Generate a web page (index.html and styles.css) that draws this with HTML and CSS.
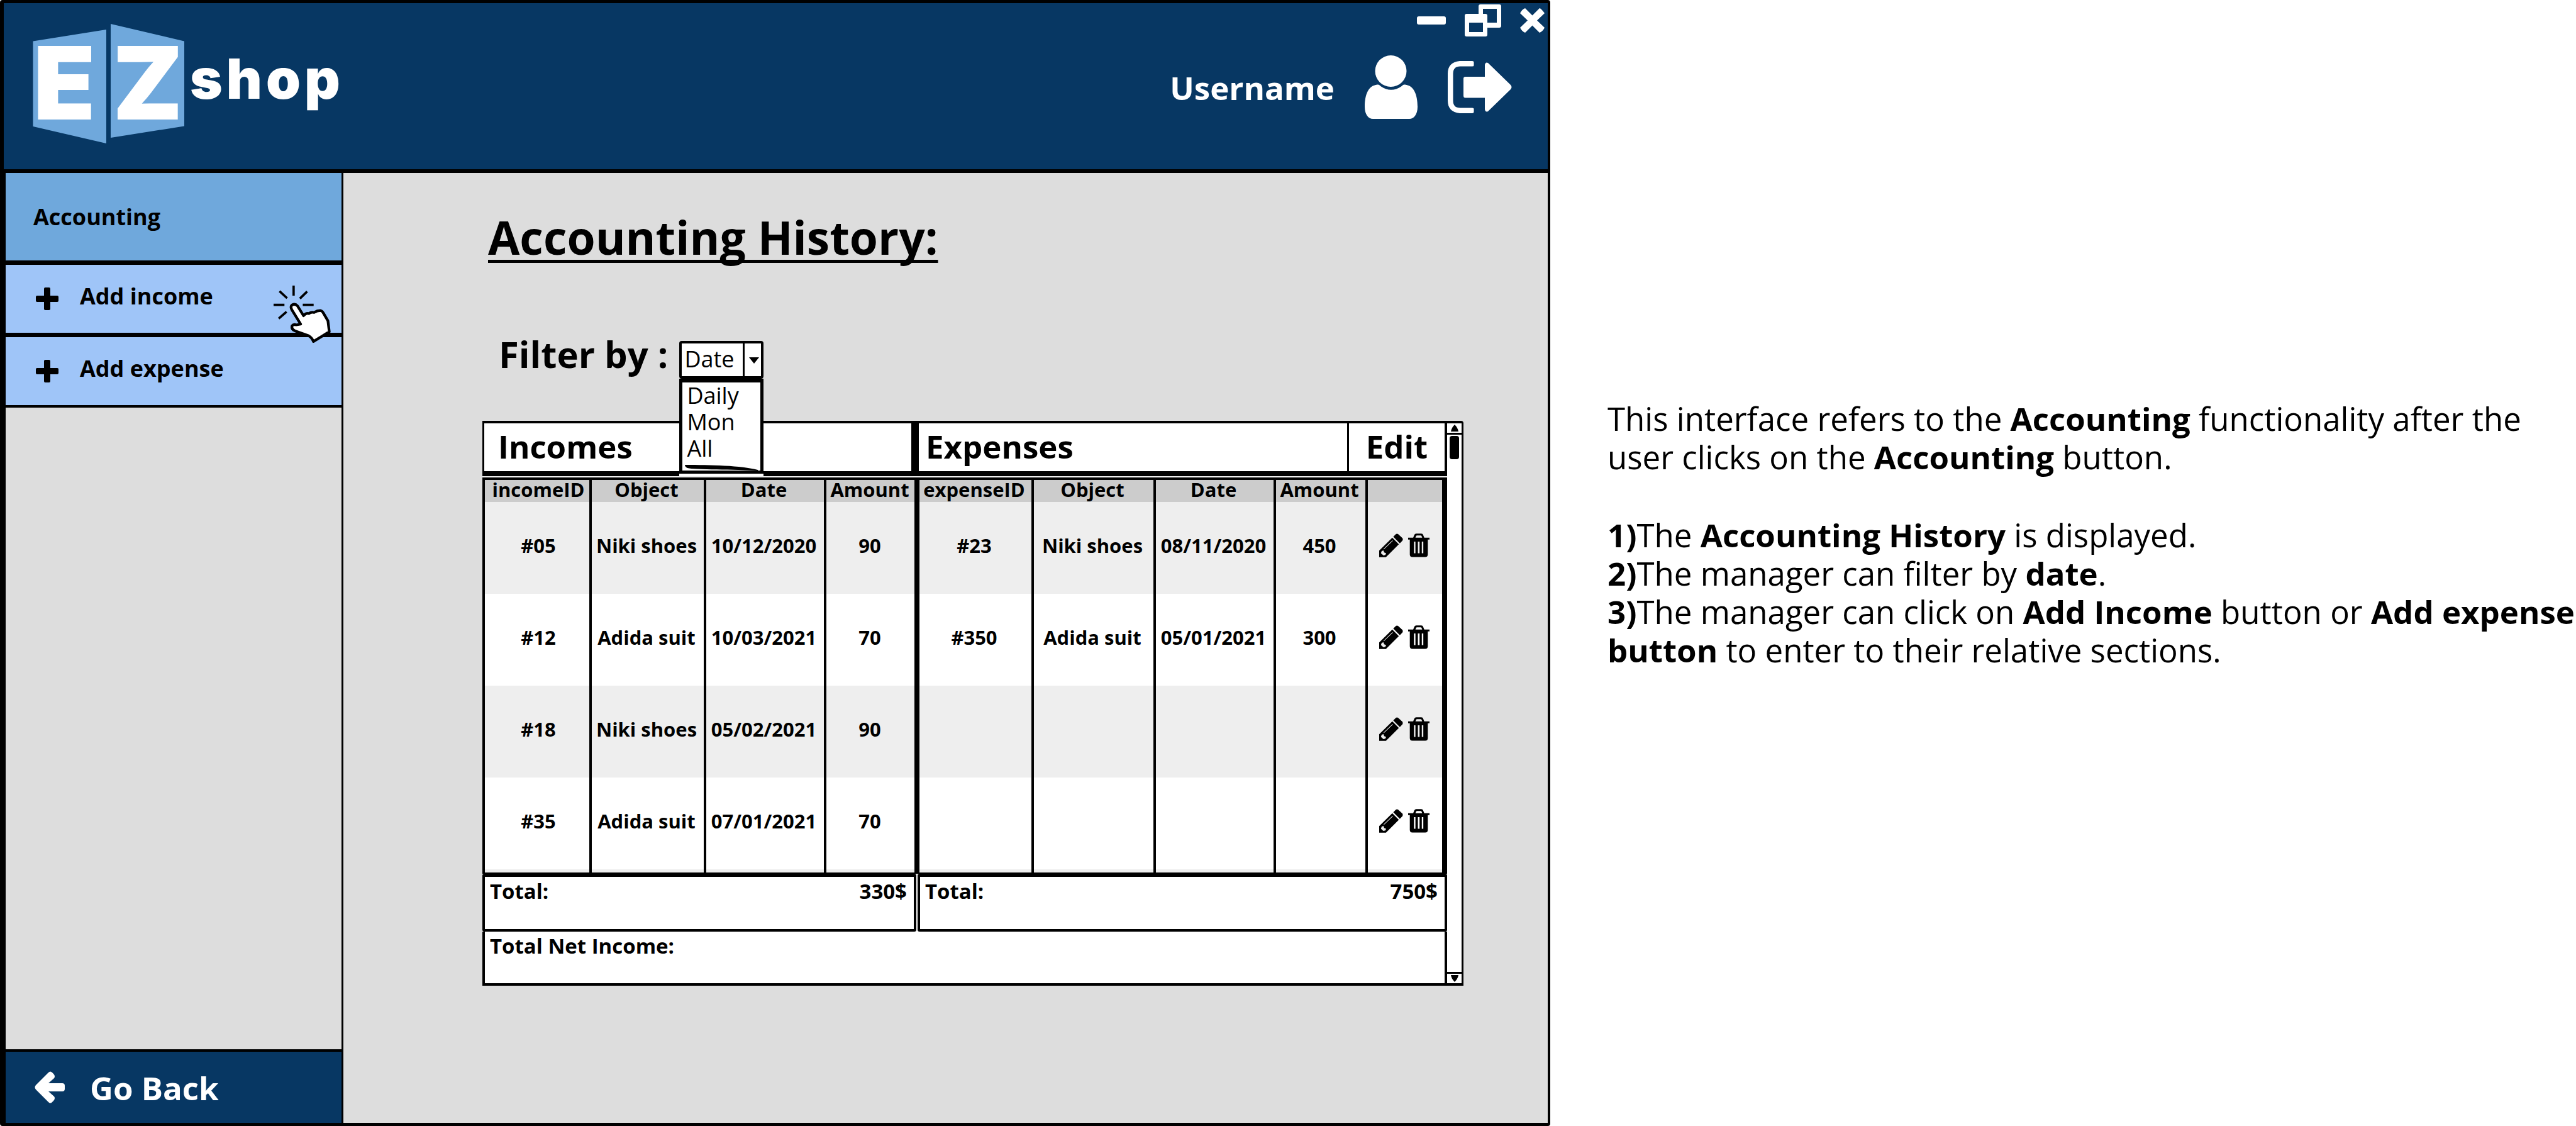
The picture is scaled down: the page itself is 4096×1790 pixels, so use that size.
FILE: index.html
```html
<!DOCTYPE html>
<html lang="en">
<head>
<meta charset="utf-8">
<title>EZ shop - Accounting History</title>
<link rel="stylesheet" href="styles.css">
</head>
<body>
<svg class="sprite" aria-hidden="true">
  <symbol id="pencil" viewBox="60 49 124 124">
    <path d="M60 172V138L128 71L162 105L95 172Z"/>
    <path d="M133 66L146 53Q152 48 159 53L180 73Q185 80 180 87L167 100Z"/>
    <path class="cut" d="M84 132L131 87L129 85L83 129Z"/>
    <path class="cut" d="M73 140L82 137L86 148L96 152L92 161L82 163L75 157L69 152Z"/>
  </symbol>
  <symbol id="trash" viewBox="210 47 114 126">
    <path fill-rule="evenodd" d="M210 69H237L243 54Q246 47 254 47H280Q288 47 290 54L296 69H324V79H315V158Q315 172 301 172H233Q219 172 219 158V79H210ZM249 69H285L281 59Q280 57 277 57H257Q254 57 253 59ZM241 90V152H249V90ZM262 90V152H271V90ZM283 90V152H291V90Z"/>
  </symbol>
  <symbol id="plus" viewBox="0 0 36 36">
    <path d="M15 0H21Q23 0 23 2V13H34Q36 13 36 15V21Q36 23 34 23H23V34Q23 36 21 36H15Q13 36 13 34V23H2Q0 23 0 21V15Q0 13 2 13H13V2Q13 0 15 0Z"/>
  </symbol>
</svg>

<div class="page">
  <div class="window">
    <header class="topbar">
      <svg class="logo" viewBox="0 0 500 192" role="img" aria-label="EZ shop">
        <polygon class="logo-panel" points="0.5,28.5 117,10 117,191 0.5,164"/>
        <polygon class="logo-panel" points="124,1 241,28.5 241,163.5 124,182"/>
        <text class="logo-letter" x="1" y="153">E</text>
        <text class="logo-letter" x="127" y="153">Z</text>
        <text class="logo-word" x="250" y="120">shop</text>
      </svg>
      <div class="topbar-right">
        <div class="controls">
          <button class="icon-button" aria-label="Minimize"><svg width="46" height="13"><rect width="46" height="13" rx="3"/></svg></button>
          <button class="icon-button" aria-label="Restore"><svg width="58" height="51" fill-rule="evenodd"><path d="M25 0H55Q58 0 58 3V34Q58 37 55 37H36V29H51V7H29V17H22V3Q22 0 25 0Z"/><path d="M3 15H33Q36 15 36 18V48Q36 51 33 51H3Q0 51 0 48V18Q0 15 3 15ZM7 29V44H29V29Z"/></svg></button>
          <button class="icon-button" aria-label="Close"><svg width="39" height="39"><path d="M8 0L19.500 11.500L31 0Q33 0 39 8L27 19.500L39 31Q36 37 31 39L19.500 27.500L8 39Q3 37 0 31L12 19.500L0 8Q3 2 8 0Z"/></svg></button>
        </div>
        <div class="account">
          <span class="username">Username</span>
          <svg width="84" height="101" aria-hidden="true"><ellipse cx="41.500" cy="25" rx="25" ry="25"/><path d="M20 46.500C6 48 0 62 0 82C0 94 6 101 13 101H71C78 101 84 94 84 82C84 62 78 48 64 46.500C61 46 60 48 58 49.500C48 56.500 36 56.500 26 49.500C24 48 23 46 20 46.500Z"/></svg>
          <button class="icon-button" aria-label="Log out"><svg width="102" height="83"><path d="M39 0Q41.500 0 41.500 2V7Q41.500 8.500 39 8.500H20Q8.500 8.500 8.500 20V63Q8.500 74.500 20 74.500H39Q41.500 74.500 41.500 76V81Q41.500 83 39 83H19Q0 81 0 63V20Q0 2 19 0Z"/><path d="M28 25H59V6Q60 1 64 3L100 38Q103 41.500 100 45L64 80Q60 82 59 77V58.500H28Q25 58.500 25 55V28Q25 25 28 25Z"/></svg></button>
        </div>
      </div>
    </header>

    <div class="body">
      <nav class="sidebar">
        <a class="nav-item nav-current" href="#accounting">Accounting</a>
        <a class="nav-item" href="#add-income"><svg class="plus"><use href="#plus"/></svg><span class="nav-label">Add income</span>
          <svg class="pointer" viewBox="24 24 300 300" aria-hidden="true">
            <path class="rays" d="M129 24V77M55 53L95 90M200 55L162 92M24 125H81M177 125H234M51 197L92 161"/>
            <path class="hand" d="M166 226L120 151Q110 133 122 125Q137 117 149 130L181 182Q195 166 209 171Q220 160 236 165Q252 155 270 155Q279 156 285 168L309 209L316 266L233 317Q224 295 208 287L136 261Q116 252 121 235Q128 225 143 230Z"/>
          </svg>
        </a>
        <a class="nav-item nav-last" href="#add-expense"><svg class="plus"><use href="#plus"/></svg><span class="nav-label">Add expense</span></a>
        <button class="back"><svg width="48" height="51" aria-hidden="true"><path d="M22 2Q25 -1 28 2Q34 7 31 11L22 19H44Q48 19 48 23V28Q48 32 44 32H22L31 40Q34 44 28 49Q25 52 22 49L2 29Q-1 25.500 2 22Z"/></svg>Go Back</button>
      </nav>

      <main class="content">
        <h1 class="title">Accounting History:</h1>
        <div class="filter">
          <label class="filter-label" for="filter">Filter by :</label>
          <div class="combo">
            <select class="combo-select" id="filter"><option>Date</option></select>
            <svg class="combo-arrow" width="33" height="52" aria-hidden="true"><path d="M0 0H3V52H0ZM10 22H26L18 32Z"/></svg>
            <div class="combo-popup">
              <ul class="combo-list">
                <li>Daily</li>
                <li>Mon</li>
                <li>All</li>
              </ul>
              <svg class="combo-scribble" viewBox="0 0 116 9" aria-hidden="true"><path d="M0 0C40 0 90 1 116 8V9C80 7 15 8 4 5Q0 3 0 0Z"/></svg>
            </div>
          </div>
        </div>

        <div class="panel">
          <div class="panel-main">
            <div class="sections">
              <h2 class="section section-incomes">Incomes</h2>
              <h2 class="section section-expenses">Expenses</h2>
              <h2 class="section section-edit">Edit</h2>
            </div>
            <table class="ledger">
              <colgroup><col class="c-iid"><col class="c-iobj"><col class="c-date"><col class="c-iamt"><col class="c-eid"><col class="c-eobj"><col class="c-date"><col class="c-eamt"><col class="c-edit"></colgroup>
              <thead>
                <tr><th>incomeID</th><th>Object</th><th>Date</th><th class="thick">Amount</th><th>expenseID</th><th>Object</th><th>Date</th><th>Amount</th><th class="thick"></th></tr>
              </thead>
              <tbody>
                <tr><td>#05</td><td>Niki shoes</td><td>10/12/2020</td><td class="thick">90</td><td>#23</td><td>Niki shoes</td><td>08/11/2020</td><td>450</td><td class="thick"><div class="actions"><button class="icon-button" aria-label="Edit"><svg class="pencil"><use href="#pencil"/></svg></button><button class="icon-button" aria-label="Delete"><svg class="trash"><use href="#trash"/></svg></button></div></td></tr>
                <tr><td>#12</td><td>Adida suit</td><td>10/03/2021</td><td class="thick">70</td><td>#350</td><td>Adida suit</td><td>05/01/2021</td><td>300</td><td class="thick"><div class="actions"><button class="icon-button" aria-label="Edit"><svg class="pencil"><use href="#pencil"/></svg></button><button class="icon-button" aria-label="Delete"><svg class="trash"><use href="#trash"/></svg></button></div></td></tr>
                <tr><td>#18</td><td>Niki shoes</td><td>05/02/2021</td><td class="thick">90</td><td></td><td></td><td></td><td></td><td class="thick"><div class="actions"><button class="icon-button" aria-label="Edit"><svg class="pencil"><use href="#pencil"/></svg></button><button class="icon-button" aria-label="Delete"><svg class="trash"><use href="#trash"/></svg></button></div></td></tr>
                <tr><td>#35</td><td>Adida suit</td><td>07/01/2021</td><td class="thick">70</td><td></td><td></td><td></td><td></td><td class="thick"><div class="actions"><button class="icon-button" aria-label="Edit"><svg class="pencil"><use href="#pencil"/></svg></button><button class="icon-button" aria-label="Delete"><svg class="trash"><use href="#trash"/></svg></button></div></td></tr>
              </tbody>
            </table>
            <div class="totals">
              <div class="total"><span>Total:</span><span>330$</span></div>
              <div class="total"><span>Total:</span><span>750$</span></div>
            </div>
            <div class="net">Total Net Income:</div>
          </div>
          <div class="scrollbar">
            <button class="scroll-button scroll-up" aria-label="Scroll up"><svg width="12" height="11"><path d="M6 0Q11 5 12 11H0Q1 5 6 0Z"/></svg></button>
            <div class="scroll-track"><div class="scroll-thumb"></div></div>
            <button class="scroll-button scroll-down" aria-label="Scroll down"><svg width="12" height="11"><path d="M6 11Q11 6 12 0H0Q1 6 6 11Z"/></svg></button>
          </div>
        </div>
      </main>
    </div>
  </div>

  <aside class="notes">
    <p>This interface refers to the <b>Accounting</b> functionality after the user clicks on the <b>Accounting</b> button.</p>
    <ol class="steps">
      <li><b>1)</b>The <b>Accounting History</b> is displayed.</li>
      <li><b>2)</b>The manager can filter by <b>date</b>.</li>
      <li><b>3)</b>The manager can click on <b>Add Income</b> button or <b>Add expense button</b> to enter to their relative sections.</li>
    </ol>
  </aside>
</div>
</body>
</html>
```
FILE: styles.css
```css
* {
  box-sizing: border-box;
}

body {
  margin: 0;
  background: #fff;
  color: #000;
  font-family: "Open Sans", "Noto Sans", sans-serif;
}

button {
  margin: 0;
  padding: 0;
  border: 0;
  background: none;
  color: inherit;
  font: inherit;
  cursor: pointer;
}

svg {
  display: block;
  flex: none;
  fill: currentColor;
}

.sprite {
  position: absolute;
  width: 0;
  height: 0;
}

.cut {
  fill: #eee;
}

.page {
  display: grid;
  grid-template-columns: minmax(0, 2465fr) minmax(0, 1631fr);
  min-height: 100vh;
}

.window {
  display: flex;
  flex-direction: column;
  border: solid #000;
  border-width: 5px 4px 5px 6px;
  border-radius: 4px;
  background: #ddd;
}

/* Top bar */

.topbar {
  display: flex;
  justify-content: space-between;
  height: 270px;
  padding-left: 46px;
  border-bottom: 6px solid #000;
  background: #073763;
  color: #fff;
}

.logo {
  width: 500px;
  height: 192px;
  margin-top: 32px;
  overflow: visible;
}

.logo-panel {
  fill: #6fa8dc;
}

.logo-letter,
.logo-word {
  font-family: Inter, "Liberation Sans", sans-serif;
  font-weight: 900;
}

.logo-letter {
  font-size: 161px;
}

.logo-word {
  font-size: 88px;
  letter-spacing: 6px;
}

.topbar-right {
  display: flex;
  flex-direction: column;
  align-items: flex-end;
  gap: 30px;
  padding-top: 2px;
}

.controls {
  display: flex;
  align-items: center;
  gap: 30px;
  padding-right: 5px;
}

.account {
  display: flex;
  align-items: center;
  gap: 48px;
  padding-right: 57px;
}

.username {
  font-size: 51px;
  font-weight: 700;
}

/* Side bar */

.body {
  display: grid;
  flex: 1;
  grid-template-columns: minmax(0, 540fr) minmax(0, 1915fr);
}

.sidebar {
  display: flex;
  flex-direction: column;
  border: solid #000;
  border-width: 0 3px;
}

.nav-item {
  position: relative;
  display: flex;
  align-items: center;
  gap: 34px;
  height: 115px;
  padding-left: 48px;
  border-bottom: 7px solid #000;
  background: #9fc5f8;
  color: #000;
  font-size: 36px;
  font-weight: 700;
  text-decoration: none;
}

.nav-current {
  height: 146px;
  padding-left: 44px;
  background: #6fa8dc;
}

.nav-last {
  height: 112px;
  border-bottom-width: 4px;
}

.nav-label {
  padding-bottom: 10px;
}

.plus {
  width: 36px;
  height: 36px;
}

.pointer {
  position: absolute;
  top: 33px;
  right: 17px;
  z-index: 1;
  width: 91px;
  height: 91px;
}

.rays {
  fill: none;
  stroke: #000;
  stroke-width: 12;
}

.hand {
  fill: #fff;
  stroke: #000;
  stroke-width: 14;
  stroke-linejoin: round;
}

.back {
  display: flex;
  align-items: center;
  gap: 40px;
  height: 117px;
  margin-top: auto;
  padding-left: 46px;
  border-top: 4px solid #000;
  background: #073763;
  color: #fff;
  font-size: 51px;
  font-weight: 700;
}

/* Content */

.content {
  padding: 52px 134px 0 221px;
}

.title {
  margin: 0 0 115px 9px;
  font-size: 73px;
  line-height: 100px;
  text-decoration: underline;
  text-decoration-skip-ink: none;
  text-decoration-thickness: 5px;
  text-underline-offset: 8px;
}

.filter {
  display: flex;
  gap: 18px;
  margin-bottom: 67px;
  padding-left: 26px;
}

.filter-label {
  font-size: 58px;
  font-weight: 700;
  line-height: 42px;
}

.combo {
  position: relative;
  width: 134px;
  height: 60px;
  font-size: 36px;
}

.combo-select {
  width: 100%;
  height: 100%;
  padding: 0 0 4px 4px;
  border: 4px solid #000;
  border-radius: 4px;
  background: #fff;
  color: #000;
  font: inherit;
  appearance: none;
}

.combo-arrow {
  position: absolute;
  top: 4px;
  right: 0;
  pointer-events: none;
}

.combo-popup {
  position: absolute;
  top: 100%;
  left: 0;
  z-index: 1;
  width: 100%;
  padding: 0 5px 0 4px;
  border: solid #000;
  border-width: 6px 5px 5px;
  background: #fff;
  box-shadow: 0 4px #fff;
}

.combo-list {
  margin: 0 0 5px;
  padding: 0 0 0 3px;
  line-height: 42px;
  list-style: none;
}

.combo-scribble {
  width: 116px;
  height: 9px;
}

/* Ledger panel */

.panel {
  display: flex;
}

.panel-main {
  flex: 1;
  min-width: 0;
  background: #eee;
}

.sections {
  display: grid;
  grid-template-columns: minmax(0, 694fr) minmax(0, 681fr) minmax(0, 159fr);
  margin-bottom: 2px;
}

.section {
  display: flex;
  align-items: center;
  height: 88px;
  margin: 0;
  padding: 0 11px 4px;
  border: solid #000;
  border-width: 4px 0 8px;
  background: #fff;
  font-size: 51px;
  line-height: 60px;
}

.section-incomes {
  padding-left: 22px;
  border-right-width: 12px;
  border-left-width: 3px;
}

.section-edit {
  justify-content: center;
  border-right-width: 4px;
  border-left-width: 3px;
}

.ledger {
  width: 100%;
  table-layout: fixed;
  border: solid #000;
  border-width: 4px 0 2px 4px;
  border-collapse: separate;
  border-spacing: 0;
  font-size: 31px;
  font-weight: 700;
  line-height: 30px;
  text-align: center;
}

.c-iid { width: 170px; }
.c-iobj { width: 182px; }
.c-date { width: 191px; }
.c-iamt { width: 148px; }
.c-eid { width: 182px; }
.c-eobj { width: 194px; }
.c-eamt { width: 146px; }
.c-edit { width: 126px; }

.ledger th,
.ledger td {
  padding: 0 4px 5px 0;
  border-right: 4px solid #000;
  white-space: nowrap;
}

.ledger th {
  height: 35px;
  background: #ccc;
}

.ledger th:first-child,
.ledger td:first-child {
  padding-right: 0;
  padding-left: 4px;
}

.ledger td {
  height: 146px;
  padding-bottom: 8px;
  background: #eee;
}

.ledger tbody tr:nth-child(even) td {
  background: #fff;
}

.ledger tbody tr:last-child td {
  height: 151px;
  padding-bottom: 13px;
  background: linear-gradient(#fff 146px, #eee 146px);
}

.ledger .thick {
  padding-right: 2px;
  border-right-width: 8px;
}

.actions {
  display: flex;
  align-items: center;
  justify-content: center;
  gap: 8px;
}

.pencil {
  width: 38px;
  height: 38px;
}

.trash {
  width: 34px;
  height: 38px;
}

.totals {
  display: grid;
  grid-template-columns: minmax(0, 690fr) minmax(0, 842fr);
  gap: 2px;
  background: #fff;
  font-size: 33px;
  font-weight: 700;
  line-height: 45px;
}

.total {
  display: flex;
  justify-content: space-between;
  height: 92px;
  padding: 0 11px 0 8px;
  border: solid #000;
  border-width: 5px 4px 4px;
  border-radius: 3px;
}

.net {
  height: 86px;
  padding: 0 8px;
  border: solid #000;
  border-width: 0 4px 4px;
  background: #fff;
  font-size: 33px;
  font-weight: 700;
  line-height: 45px;
}

.scrollbar {
  display: flex;
  flex-direction: column;
  width: 26px;
  border: solid #000;
  border-width: 4px 3px 4px 0;
  border-radius: 0 4px 0 0;
  background: #fff;
}

.scroll-button {
  display: flex;
  align-items: center;
  justify-content: center;
  height: 18px;
}

.scroll-up {
  border-bottom: 3px solid #000;
}

.scroll-down {
  border-top: 3px solid #000;
}

.scroll-track {
  flex: 1;
  padding: 2px 4px;
}

.scroll-thumb {
  height: 37px;
  border-radius: 4px;
  background: #000;
}

/* Notes */

.notes {
  padding: 635px 0 0 91px;
  font-size: 51px;
  line-height: 61px;
}

.notes p {
  margin: 0 0 63px;
}

.steps {
  margin: 0;
  padding: 0;
  list-style: none;
}
```
